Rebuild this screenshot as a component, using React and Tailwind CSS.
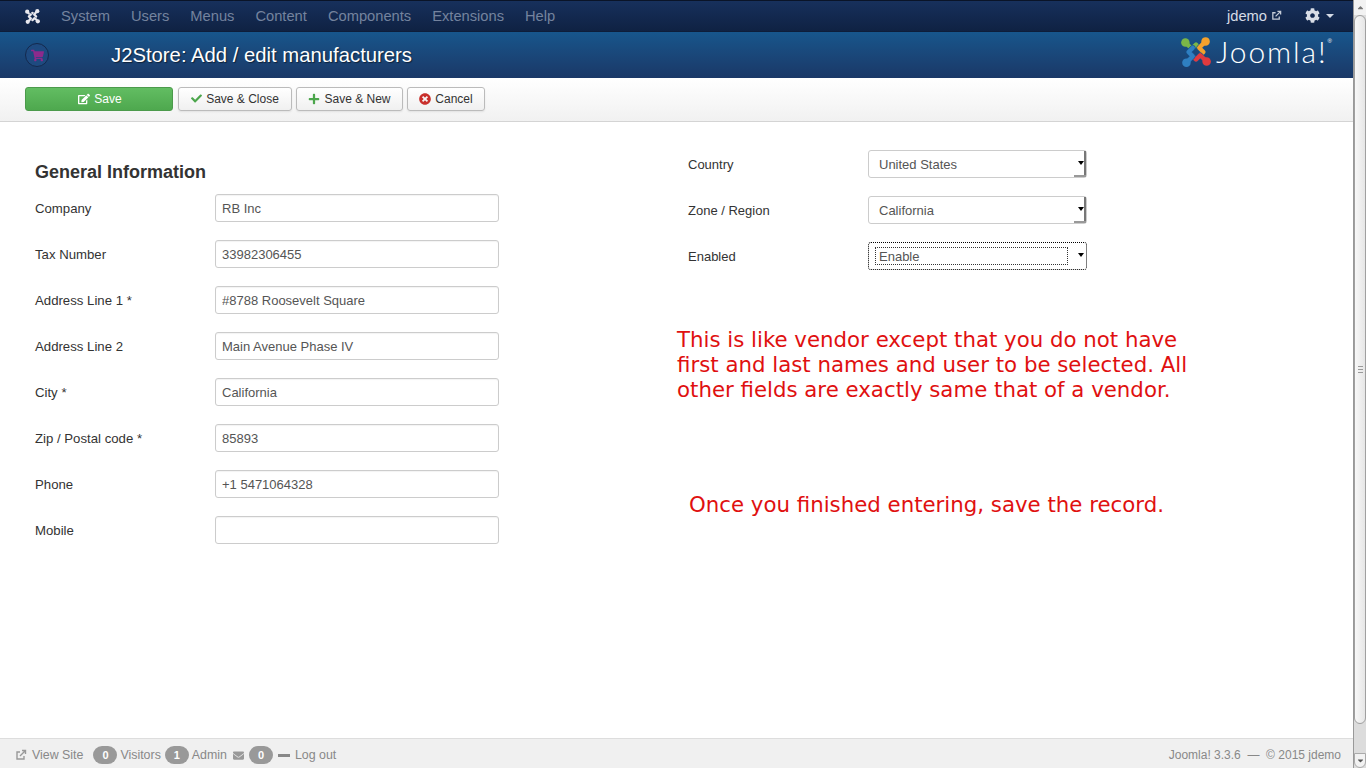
import React from 'react';
import { FaEdit, FaCheck, FaPlus, FaTimesCircle, FaCog, FaEnvelope, FaShoppingCart, FaCaretDown, FaCaretUp } from 'react-icons/fa';

const NAV_ITEMS = ['System', 'Users', 'Menus', 'Content', 'Components', 'Extensions', 'Help'];

const LEFT_FIELDS = [
  { label: 'Company', value: 'RB Inc' },
  { label: 'Tax Number', value: '33982306455' },
  { label: 'Address Line 1 *', value: '#8788 Roosevelt Square' },
  { label: 'Address Line 2', value: 'Main Avenue Phase IV' },
  { label: 'City *', value: 'California' },
  { label: 'Zip / Postal code *', value: '85893' },
  { label: 'Phone', value: '+1 5471064328' },
  { label: 'Mobile', value: '' }
];

const ARMS = [
  { hook: 'M6 7 L12 13 L16 9 L20 13', head: [6, 7] },
  { hook: 'M25 6 L19 12 L23 16 L19 20', head: [25, 6] },
  { hook: 'M26 25 L20 19 L16 23 L12 19', head: [26, 25] },
  { hook: 'M7 26 L13 20 L9 16 L13 12', head: [7, 26] }
];

// Joomla knot, four hooked arms with a round head
const JoomlaMark = ({ className, colors, gap }) => (
  <svg className={className} viewBox="0 0 32 32" fill="none" strokeLinecap="round" strokeLinejoin="round">
    {ARMS.map((arm, i) => (
      <g key={arm.hook}>
        <path d={arm.hook} stroke={gap} strokeWidth="5" />
        <path d={arm.hook} stroke={colors[i]} strokeWidth="4" />
        <circle cx={arm.head[0]} cy={arm.head[1]} r="4" fill={colors[i]} />
      </g>
    ))}
  </svg>
);

const ExternalIcon = ({ className }) => (
  <svg className={className} viewBox="0 0 12 12" fill="none" stroke="currentColor" strokeWidth="1.4">
    <path d="M9 7v3H2V3h3" />
    <path d="M5 7l5-5M7 1.5h3.5V5" />
  </svg>
);

const ToolbarButton = ({ icon, label, width }) => (
  <button className={`${width} h-6 flex items-center justify-center gap-1 rounded-[3px] border border-[#bbb] bg-gradient-to-b from-white to-[#f0f0f0] text-xs text-[#333] shadow-[0_1px_2px_rgba(0,0,0,0.08)]`}>
    {icon}
    <span>{label}</span>
  </button>
);

const Field = ({ label, value }) => (
  <div className="flex items-center h-7 mb-[18px]">
    <label className="w-[180px] pt-px text-[13.2px] text-[#333]">{label}</label>
    <input
      readOnly
      value={value}
      className="w-[284px] h-7 px-[6px] text-[13px] text-[#555] bg-white border border-[#ccc] rounded-[3px] outline-none shadow-[inset_0_1px_1px_rgba(0,0,0,0.05)]"
    />
  </div>
);

const SelectField = ({ label, value, focused }) => (
  <div className="flex items-center h-7 mb-[18px]">
    <label className="w-[180px] pt-[2px] text-[13px] text-[#333]">{label}</label>
    <div className={`relative w-[219px] h-7 bg-white rounded-[3px] text-[13px] text-[#555] flex items-center ${focused ? 'border border-dotted border-black' : 'border border-[#ccc]'}`}>
      {focused ? (
        <span className="ml-[6px] w-[193px] h-[18px] leading-[18px] pl-[3px] border border-dotted border-[#333]">{value}</span>
      ) : (
        <span className="ml-[10px] pt-[2px]">{value}</span>
      )}
      <span className="absolute right-[2px] top-[10px] border-x-[3px] border-t-[4px] border-x-transparent border-t-black" />
      {!focused && <span className="absolute right-0 top-0 bottom-0 w-[2px] bg-[#777]" />}
      {!focused && <span className="absolute right-0 bottom-0 w-[12px] h-[2px] bg-[#999]" />}
    </div>
  </div>
);

const Badge = ({ children }) => (
  <span className="w-6 h-[18px] rounded-full bg-[#999] text-white text-[11px] font-bold flex items-center justify-center">{children}</span>
);

const Scrollbar = () => (
  <div className="w-[13px] shrink-0 flex flex-col bg-[#dcdcdc] border-l border-[#999]">
    <div className="h-[15px] bg-[#f2f2f2] flex items-center justify-center text-[#777] text-[9px]"><FaCaretUp /></div>
    <div className="h-[709px] rounded-b-[6px] rounded-t-[6px] border border-[#a0a0a0] bg-gradient-to-r from-[#f8f8f8] to-[#e6e6e6] flex flex-col items-center justify-center gap-[2px]">
      <span className="w-[5px] h-px bg-[#999]" />
      <span className="w-[5px] h-px bg-[#999]" />
      <span className="w-[5px] h-px bg-[#999]" />
    </div>
    <div className="flex-1" />
    <div className="h-[15px] bg-[#f2f2f2] flex items-center justify-center text-[#555] text-[9px] border border-[#aaa] rounded-b-[6px]"><FaCaretDown /></div>
  </div>
);

export default function App() {
  return (
    <div className="h-screen w-full flex overflow-hidden bg-white font-['Liberation_Sans',Arial,sans-serif]">
      <div className="flex-1 min-w-0 flex flex-col">
        {/* Top menu */}
        <nav className="h-8 shrink-0 flex items-center bg-gradient-to-b from-[#17305c] to-[#0f2243] border-t border-[#0a1428] border-b border-b-[#0e1e3a]">
          <JoomlaMark className="w-[17px] h-[17px] ml-[24px] mr-[20px]" colors={['#e8e8ee', '#e8e8ee', '#e8e8ee', '#e8e8ee']} gap="#142a52" />
          <div className="flex gap-[21px] text-[14.7px] text-[#74839e]">
            {NAV_ITEMS.map((item) => <span key={item}>{item}</span>)}
          </div>
          <div className="ml-auto flex items-center text-[14.7px] text-[#d5dbe6]">
            <span>jdemo</span>
            <ExternalIcon className="w-[11px] h-[11px] ml-[4px] text-[#c5ccd8]" />
            <FaCog className="w-[15px] h-[15px] ml-[23px] text-[#d8dde6]" />
            <span className="ml-[6px] mr-[19px] border-x-[4px] border-t-[4px] border-x-transparent border-t-[#d5dbe6]" />
          </div>
        </nav>

        {/* Title bar */}
        <header className="h-[46px] shrink-0 flex items-center bg-gradient-to-b from-[#17568c] to-[#1a3867]">
          <div className="w-6 h-6 ml-[25px] rounded-full border border-[#14294d] bg-[#1e4a80] flex items-center justify-center">
            <FaShoppingCart className="w-[13px] h-[13px] text-[#8c2a8c]" />
          </div>
          <h1 className="ml-[62px] text-[20.3px] text-white [text-shadow:1px_1px_1px_rgba(0,0,0,0.5)]">J2Store: Add / edit manufacturers</h1>
          <div className="ml-auto mr-[21px] -mt-[7px] flex items-center">
            <JoomlaMark className="w-[34px] h-[34px]" colors={['#7ab648', '#f4a12c', '#e03a3e', '#2f7fc1']} gap="#17508a" />
            <span className="ml-[3px] -mt-[1px] text-[30px] tracking-[1.9px] leading-none font-light text-white font-['Lato',sans-serif]">Joomla!</span>
            <span className="self-start mt-[2px] text-[6px] text-white">®</span>
          </div>
        </header>

        {/* Toolbar */}
        <div className="h-[44px] shrink-0 flex items-center gap-[4px] px-[25px] pb-[2px] bg-gradient-to-b from-white to-[#f1f1f1] border-b border-[#d4d4d4]">
          <button className="w-[148px] h-6 mr-[1px] pl-[2px] flex items-center justify-center gap-1 rounded-[3px] border border-[#4b9a4b] bg-gradient-to-b from-[#62bd62] to-[#4ea84e] text-xs text-white">
            <FaEdit className="w-3 h-3" />
            <span>Save</span>
          </button>
          <ToolbarButton width="w-[114px]" icon={<FaCheck className="w-[11px] h-[11px] text-[#4ca64c]" />} label="Save & Close" />
          <ToolbarButton width="w-[107px]" icon={<FaPlus className="w-[12px] h-[12px] text-[#4ca64c]" />} label="Save & New" />
          <ToolbarButton width="w-[78px]" icon={<FaTimesCircle className="w-[12px] h-[12px] text-[#c9302c]" />} label="Cancel" />
        </div>

        {/* Form */}
        <main className="flex-1 flex min-h-0">
          <section className="w-[653px] pl-[35px] pt-[39px] shrink-0">
            <h2 className="text-lg font-bold text-[#333] leading-[22px] mb-[11px]">General Information</h2>
            {LEFT_FIELDS.map((f) => <Field key={f.label} label={f.label} value={f.value} />)}
          </section>
          <section className="flex-1 pt-[28px] pl-[35px]">
            <SelectField label="Country" value="United States" />
            <SelectField label="Zone / Region" value="California" />
            <SelectField label="Enabled" value="Enable" focused />
            <p className="-ml-[11px] mt-[57px] text-[21.3px] leading-[25px] text-[#e01010] font-['DejaVu_Sans',sans-serif] whitespace-nowrap">
              This is like vendor except that you do not have<br />
              first and last names and user to be selected. All<br />
              other fields are exactly same that of a vendor.
            </p>
            <p className="ml-[1px] mt-[90px] text-[21.3px] leading-[25px] text-[#e01010] font-['DejaVu_Sans',sans-serif] whitespace-nowrap">
              Once you finished entering, save the record.
            </p>
          </section>
        </main>

        {/* Status bar */}
        <footer className="h-[30px] shrink-0 flex items-center px-[15px] pt-[3px] bg-[#f0f0f0] border-t border-[#ddd] text-[12.4px] text-[#888]">
          <ExternalIcon className="w-[12px] h-[12px] text-[#999]" />
          <span className="ml-[5px] mr-[10px]">View Site</span>
          <Badge>0</Badge>
          <span className="ml-[3px] mr-[4px]">Visitors</span>
          <Badge>1</Badge>
          <span className="ml-[3px] mr-[5px]">Admin</span>
          <FaEnvelope className="w-[13px] h-[11px] mr-[4px] text-[#999]" />
          <Badge>0</Badge>
          <span className="ml-[5px] w-[12px] h-[3px] bg-[#888]" />
          <span className="ml-[5px]">Log out</span>
          <span className="ml-auto -mr-[3px] text-xs">Joomla! 3.3.6 &nbsp;— &nbsp;© 2015 jdemo</span>
        </footer>
      </div>
      <Scrollbar />
    </div>
  );
}
